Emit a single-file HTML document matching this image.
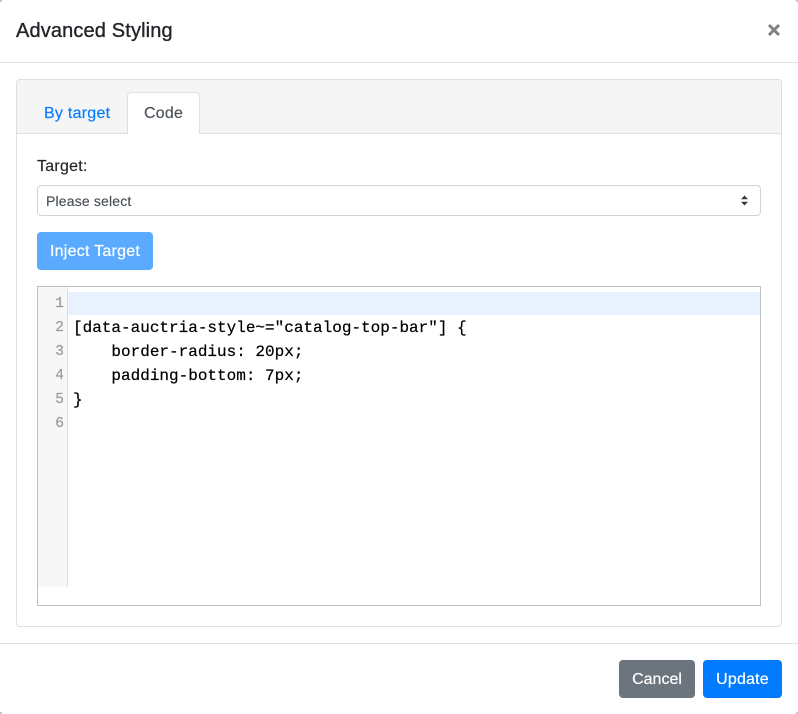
<!DOCTYPE html>
<html>
<head>
<meta charset="utf-8">
<style>
html,body{margin:0;padding:0;background:#fff;}
body{width:798px;height:714px;position:relative;overflow:hidden;font-family:"Liberation Sans",sans-serif;color:#212529;}
div,span{position:absolute;box-sizing:border-box;white-space:pre;}
.t{line-height:24px;font-size:16px;-webkit-text-stroke:.15px currentColor;}
.code{font-family:"Liberation Mono",monospace;font-size:16px;line-height:24px;color:#000;left:73px;-webkit-text-stroke:.2px #000;}
.n{font-family:"Liberation Mono",monospace;font-size:14.5px;line-height:24px;color:#999;left:38px;width:26px;text-align:right;-webkit-text-stroke:.2px #999;}
.btn{color:#fff;text-align:center;border-radius:4px;font-size:16px;line-height:39px;-webkit-text-stroke:.2px #fff;}
.c{width:2px;height:2px;background:#c8c8c8;}
</style>
</head>
<body>
<div class="c" style="left:0;top:0"></div>
<div class="c" style="right:0;top:0"></div>
<div class="c" style="left:0;bottom:0"></div>
<div class="c" style="right:0;bottom:0"></div>

<div class="t" style="left:16px;top:16px;font-size:20px;line-height:30px;letter-spacing:.14px;-webkit-text-stroke:.35px #212529;">Advanced Styling</div>
<svg style="position:absolute;left:767px;top:23px" width="14" height="14" viewBox="0 0 14 14"><path d="M2 2L12 12M12 2L2 12" stroke="#808080" stroke-width="3" fill="none"/></svg>
<div style="left:0;top:62px;width:798px;height:1px;background:#dee2e6;"></div>

<div style="left:16px;top:79px;width:766px;height:548px;border:1px solid #dfdfdf;border-radius:4px;"></div>
<div style="left:17px;top:80px;width:764px;height:54px;background:#f5f5f5;border-bottom:1px solid #dfdfdf;border-radius:3px 3px 0 0;"></div>
<div style="left:127px;top:92px;width:73px;height:42px;background:#fff;border:1px solid #dee2e6;border-bottom:0;border-radius:4px 4px 0 0;"></div>
<div class="t" style="left:44px;top:102px;color:#007bff;letter-spacing:.25px;">By target</div>
<div class="t" style="left:144px;top:102px;color:#495057;letter-spacing:.2px;">Code</div>

<div class="t" style="left:37px;top:155px;letter-spacing:.25px;">Target:</div>
<div style="left:37px;top:185px;width:724px;height:31px;border:1px solid #ced4da;border-radius:4px;background:#fff;"></div>
<div style="left:46px;top:191px;font-size:14px;line-height:21px;color:#495057;letter-spacing:.17px;-webkit-text-stroke:.15px #495057;">Please select</div>
<svg style="position:absolute;left:740px;top:195px" width="9" height="11" viewBox="0 0 9 11"><path d="M4.5 0.5L8 4.2H1ZM4.5 10.5L1 6.8H8Z" fill="#343a40"/></svg>

<div class="btn" style="left:37px;top:232px;width:116px;height:38px;background:#5aabff;letter-spacing:.25px;">Inject Target</div>

<div style="left:37px;top:286px;width:724px;height:320px;border:1px solid #c0c0c0;background:#fff;"></div>
<div style="left:38px;top:287px;width:30px;height:300px;background:#f7f7f7;border-right:1px solid #ddd;"></div>
<div style="left:68px;top:292px;width:692px;height:23px;background:#e8f2fe;"></div>

<div class="n" style="top:292px;">1</div>
<div class="n" style="top:316px;">2</div>
<div class="n" style="top:340px;">3</div>
<div class="n" style="top:364px;">4</div>
<div class="n" style="top:388px;">5</div>
<div class="n" style="top:412px;">6</div>

<div class="code" style="top:316px;">[data-auctria-style~="catalog-top-bar"] {</div>
<div class="code" style="top:340px;">    border-radius: 20px;</div>
<div class="code" style="top:364px;">    padding-bottom: 7px;</div>
<div class="code" style="top:388px;">}</div>

<div style="left:0;top:643px;width:798px;height:1px;background:#dee2e6;"></div>
<div class="btn" style="left:619px;top:660px;width:76px;height:38px;background:#6c757d;">Cancel</div>
<div class="btn" style="left:703px;top:660px;width:79px;height:38px;background:#007bff;letter-spacing:.2px;">Update</div>
</body>
</html>
